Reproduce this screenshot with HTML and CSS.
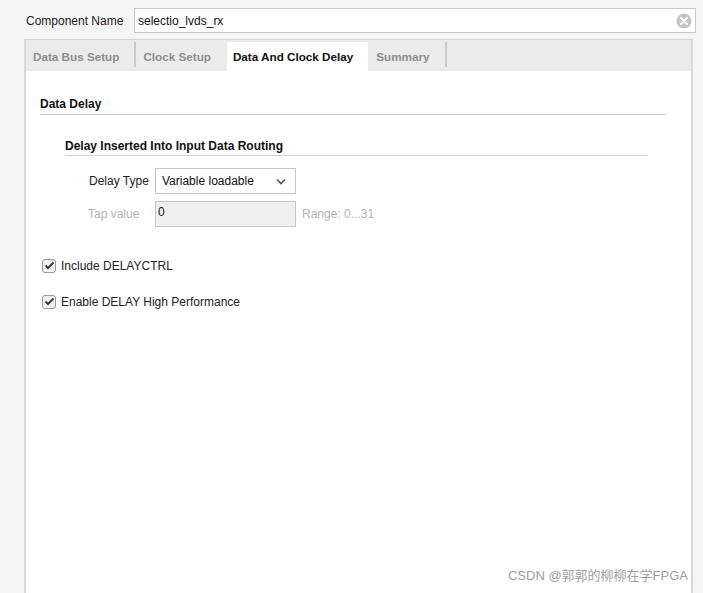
FILE: index.html
```html
<!DOCTYPE html>
<html>
<head>
<meta charset="utf-8">
<link rel="stylesheet" href="styles.css">
</head>
<body>
<div class="page">
  <div class="name-row">
    <span class="name-label">Component Name</span>
    <div class="name-input">
      <span>selectio_lvds_rx</span>
      <svg class="clear" width="16" height="16" viewBox="0 0 16 16">
        <circle cx="8" cy="8" r="7.5" fill="#c4c4c4"/>
        <path d="M5 5 L11 11 M11 5 L5 11" stroke="#fff" stroke-width="2.2" stroke-linecap="round"/>
      </svg>
    </div>
  </div>
  <div class="panel">
    <div class="tabs">
      <div class="tab sep">Data Bus Setup</div>
      <div class="tab clock">Clock Setup</div>
      <div class="tab active">Data And Clock Delay</div>
      <div class="tab sep summary">Summary</div>
    </div>
    <div class="content">
      <div class="section-title">Data Delay</div>
      <div class="sub">
        <div class="sub-title">Delay Inserted Into Input Data Routing</div>
        <div class="form">
          <div class="frow">
            <span class="flabel">Delay Type</span>
            <div class="select">
              <span>Variable loadable</span>
              <svg width="10" height="7" viewBox="0 0 10 7"><path d="M1 1.5 L5 5.5 L9 1.5" fill="none" stroke="#555" stroke-width="1.6"/></svg>
            </div>
          </div>
          <div class="frow">
            <span class="flabel disabled">Tap value</span>
            <div class="tap">0</div>
            <span class="range">Range: 0...31</span>
          </div>
        </div>
      </div>
      <div class="checks">
        <label class="check"><span class="box"><svg width="11" height="9" viewBox="0 0 11 9"><path d="M1.5 4.5 L4 7 L9.5 1.5" fill="none" stroke="#3c3c3c" stroke-width="2"/></svg></span>Include DELAYCTRL</label>
        <label class="check"><span class="box"><svg width="11" height="9" viewBox="0 0 11 9"><path d="M1.5 4.5 L4 7 L9.5 1.5" fill="none" stroke="#3c3c3c" stroke-width="2"/></svg></span>Enable DELAY High Performance</label>
      </div>
      <div class="watermark">CSDN @郭郭的柳柳在学FPGA</div>
    </div>
  </div>
</div>
</body>
</html>
```
FILE: styles.css
```css
html, body {
  margin: 0;
  padding: 0;
  background: #f5f5f5;
  font-family: "Liberation Sans", Arial, "Noto Sans CJK SC", sans-serif;
  font-size: 12px;
  color: #222;
}
.page {
  width: 703px;
  height: 593px;
  overflow: hidden;
  display: flex;
  flex-direction: column;
}
.name-row {
  display: flex;
  align-items: center;
  padding: 8px 0 0 26px;
  height: 25px;
}
.name-label {
  width: 108px;
  color: #222;
}
.name-input {
  width: 554px;
  height: 23px;
  border: 1px solid #c8c8c8;
  background: #fff;
  display: flex;
  align-items: center;
  justify-content: space-between;
  padding: 0 3px 0 3px;
  box-sizing: content-box;
}
.name-input span { color: #111; }
.panel {
  margin: 6px 0 0 24px;
  width: 665px;
  flex: 1;
  border: 1px solid #d4d4d4;
  border-left: 2px solid #d8d8d8;
  border-right: 2px solid #d8d8d8;
  border-bottom: none;
  background: #fff;
  display: flex;
  flex-direction: column;
}
.tabs {
  display: flex;
  height: 31px;
  background: #ebebeb;
  align-items: stretch;
}
.tab {
  font-weight: bold;
  font-size: 11.7px;
  color: #8e8e8e;
  padding: 1px 15px 0 7px;
  display: flex;
  align-items: center;
  position: relative;
}
.tab.sep::after {
  content: "";
  position: absolute;
  right: 0;
  top: 2px;
  bottom: 4px;
  width: 2px;
  background: #c9c9c9;
}
.tab.sep { padding-right: 17px; }
.tab.clock { padding-right: 16px; }
.tab.active {
  background: #fff;
  color: #111;
  margin-top: 2px;
  padding-top: 0;
  padding-left: 6px;
  padding-right: 15px;
}
.tab.summary { padding-left: 8px; }
.content {
  flex: 1;
  position: relative;
  padding: 0 0 0 14px;
}
.section-title {
  font-weight: bold;
  color: #111;
  margin: 26px 0 0 0;
  width: 626px;
  padding-bottom: 3px;
  border-bottom: 1px solid #cfcfcf;
}
.sub {
  margin-left: 25px;
}
.sub-title {
  font-weight: bold;
  color: #111;
  margin-top: 24px;
  width: 583px;
  padding-bottom: 2px;
  border-bottom: 1px solid #cfcfcf;
}
.form {
  margin-left: 24px;
  margin-top: 12px;
  display: flex;
  flex-direction: column;
  gap: 7px;
}
.frow {
  display: flex;
  align-items: center;
  height: 26px;
}
.flabel {
  width: 66px;
  color: #222;
}
.flabel.disabled { color: #b4b4b4; margin-left: -1px; width: 67px; }
.select {
  height: 24px;
  border: 1px solid #c6c6c6;
  background: #fff;
  display: flex;
  align-items: center;
  justify-content: space-between;
  padding: 0 9px 0 6px;
  color: #111;
  box-sizing: content-box;
  width: 124px;
}
.tap {
  border: 1px solid #c6c6c6;
  background: #efefef;
  padding: 0 0 4px 2px;
  display: flex;
  align-items: center;
  color: #111;
  box-sizing: border-box;
  width: 141px;
  height: 26px;
}
.range {
  color: #b4b4b4;
  margin-left: 6px;
}
.checks {
  margin-top: 31px;
  display: flex;
  flex-direction: column;
  gap: 21px;
}
.check {
  display: flex;
  align-items: center;
  color: #222;
  height: 15px;
  margin-left: 2px;
}
.box {
  width: 12px;
  height: 12px;
  border: 1px solid #9a9a9a;
  border-radius: 3px;
  background: #f4f4f4;
  display: flex;
  align-items: center;
  justify-content: center;
  margin-right: 5px;
}
.watermark {
  position: absolute;
  right: 3px;
  bottom: 9px;
  color: #a0a0a0;
  font-size: 13px;
}
```
